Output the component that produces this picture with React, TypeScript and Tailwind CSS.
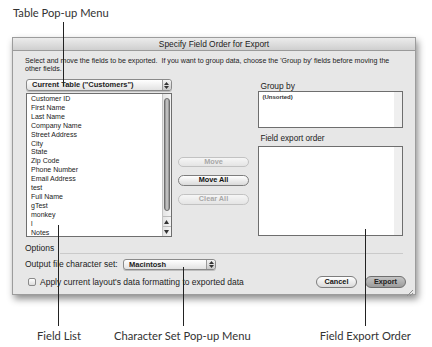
import React from 'react';

const fields = [
  'Customer ID',
  'First Name',
  'Last Name',
  'Company Name',
  'Street Address',
  'City',
  'State',
  'Zip Code',
  'Phone Number',
  'Email Address',
  'test',
  'Full Name',
  'gTest',
  'monkey',
  'l',
  'Notes',
];

const PopupArrows: React.FC = () => (
  <div className="flex h-full w-[9px] flex-col items-center justify-center gap-[1px] rounded-r-[3px] border-l border-[#9a9a9a] bg-gradient-to-b from-[#f4f4f4] to-[#c8c8c8]">
    <svg width="5" height="3" viewBox="0 0 5 3">
      <path d="M0 3 L2.5 0 L5 3 Z" fill="#333" />
    </svg>
    <svg width="5" height="3" viewBox="0 0 5 3">
      <path d="M0 0 L2.5 3 L5 0 Z" fill="#333" />
    </svg>
  </div>
);

const Popup: React.FC<{ label: string; className: string }> = ({ label, className }) => (
  <div
    className={`flex items-center justify-between rounded-[3px] border border-[#8a8a8a] bg-gradient-to-b from-[#ffffff] to-[#e2e2e2] shadow-[0_1px_0_#bdbdbd] ${className}`}
  >
    <span className="pl-[5px] text-[7.5px] font-bold text-[#222]">{label}</span>
    <PopupArrows />
  </div>
);

const Pill: React.FC<{ label: string; disabled?: boolean; dark?: boolean; className?: string }> = ({
  label,
  disabled,
  dark,
  className,
}) => (
  <div
    className={`flex items-center justify-center rounded-full border ${
      dark
        ? 'border-[#6f6f6f] bg-gradient-to-b from-[#c4c4c4] to-[#9c9c9c] text-[#222]'
        : disabled
          ? 'border-[#c2c2c2] bg-gradient-to-b from-[#f6f6f6] to-[#e4e4e4] text-[#a8a8a8]'
          : 'border-[#7d7d7d] bg-gradient-to-b from-[#ffffff] to-[#dadada] text-[#111]'
    } text-[7.3px] font-bold ${className ?? ''}`}
  >
    {label}
  </div>
);

const App: React.FC = () => {
  return (
    <div className="relative h-[347px] w-[432px] overflow-hidden bg-white font-['Liberation_Sans',Arial,sans-serif]">
      {/* top callout */}
      <div className="h-[37px] whitespace-nowrap pl-[13px] pt-[6px] font-['Lato',sans-serif] text-[11.2px] leading-[14px] text-[#333]">
        Table Pop-up Menu
      </div>

      {/* dialog */}
      <div className="ml-[12px] flex h-[258px] w-[404px] flex-col border border-[#9c9c9c] bg-[#e7e7e7] shadow-[2px_4px_7px_rgba(0,0,0,0.45)]">
        <div className="flex h-[13px] shrink-0 items-center justify-center border-b border-[#9a9a9a] bg-gradient-to-b from-[#ececec] to-[#cfcfcf] text-[8.4px] text-[#222]">
          Specify Field Order for Export
        </div>

        <div className="flex flex-1 flex-col px-[12px] pt-[6px]">
          <p className="w-[378px] text-[7.1px] leading-[8px] text-[#222]">
            Select and move the fields to be exported.&nbsp; If you want to group data, choose the 'Group by' fields
            before moving the other fields.
          </p>

          <div className="mt-[6px] flex">
            {/* left column */}
            <div className="ml-[1px] flex w-[148px] flex-col">
              <Popup label={'Current Table ("Customers")'} className="h-[12px]" />
              <div className="mt-[2px] flex h-[144px] border border-[#6e6e6e] bg-white">
                <div className="flex-1 pl-[4px] pt-[1px] text-[7px] leading-[8.9px] text-[#222]">
                  {fields.map((f) => (
                    <div key={f}>{f}</div>
                  ))}
                </div>
                <div className="flex w-[9px] flex-col border-l border-[#c4c4c4] bg-gradient-to-r from-[#e4e4e4] to-[#f4f4f4]">
                  <div className="mx-[1px] mt-[4px] h-[113px] rounded-full border border-[#6e6e6e] bg-gradient-to-r from-[#8a8a8a] via-[#d0d0d0] to-[#8a8a8a]" />
                  <div className="flex-1" />
                  <div className="flex h-[10px] items-center justify-center border-t border-[#bcbcbc]">
                    <svg width="5" height="4" viewBox="0 0 5 4">
                      <path d="M0 4 L2.5 0 L5 4 Z" fill="#333" />
                    </svg>
                  </div>
                  <div className="flex h-[10px] items-center justify-center border-t border-[#bcbcbc]">
                    <svg width="5" height="4" viewBox="0 0 5 4">
                      <path d="M0 0 L2.5 4 L5 0 Z" fill="#333" />
                    </svg>
                  </div>
                </div>
              </div>
            </div>

            {/* middle buttons */}
            <div className="ml-[6px] flex w-[73px] flex-col pt-[78px]">
              <Pill label="Move" disabled className="h-[10px]" />
              <Pill label="Move All" className="mt-[8px] h-[11px]" />
              <Pill label="Clear All" disabled className="mt-[8px] h-[11px]" />
            </div>

            {/* right column */}
            <div className="ml-[9px] flex w-[147px] flex-col">
              <div className="pl-[2px] pt-[2px] text-[8.4px] leading-[10px] text-[#222]">Group by</div>
              <div className="flex h-[37px] border border-[#6e6e6e] bg-white">
                <div className="flex-1 pl-[3px] pt-[1px] text-[6px] font-bold leading-[8px] text-[#333]">(Unsorted)</div>
                <div className="w-[8px] bg-[#efefef]" />
              </div>
              <div className="mt-[6px] pl-[2px] text-[8.2px] leading-[10px] text-[#222]">Field export order</div>
              <div className="mt-[2px] flex h-[90px] border border-[#6e6e6e] bg-white">
                <div className="flex-1" />
                <div className="w-[8px] bg-[#efefef]" />
              </div>
            </div>
          </div>

          {/* options */}
          <div className="mt-[6px] flex items-end">
            <span className="text-[8.5px] leading-[10px] text-[#222]">Options</span>
            <div className="mb-[-1px] ml-[6px] h-px flex-1 bg-[#cacaca]" />
          </div>

          <div className="mt-[5px] flex items-center">
            <span className="w-[98px] whitespace-nowrap text-[8.5px] text-[#222]">Output file character set:</span>
            <Popup label="Macintosh" className="h-[11px] w-[93px]" />
          </div>

          <div className="mt-[5px] flex items-center">
            <div className="ml-[3px] h-[8px] w-[8px] rounded-[2px] border border-[#8a8a8a] bg-gradient-to-b from-white to-[#dcdcdc]" />
            <span className="ml-[4px] whitespace-nowrap text-[8.5px] text-[#222]">
              Apply current layout's data formatting to exported data
            </span>
            <div className="flex-1" />
            <Pill label="Cancel" className="h-[12px] w-[41px]" />
            <Pill label="Export" dark className="ml-[8px] mr-[-3px] h-[12px] w-[41px]" />
          </div>
        </div>
        <div className="flex justify-end pb-[1px] pr-[1px]">
          <svg width="8" height="8" viewBox="0 0 8 8">
            <path d="M7 1 L1 7 M7 4 L4 7" stroke="#8e8e8e" strokeWidth="1" />
          </svg>
        </div>
      </div>

      {/* bottom callouts */}
      <div className="mt-[34px] flex whitespace-nowrap font-['Lato',sans-serif] text-[11.2px] leading-[14px] text-[#333]">
        <span className="ml-[37px] shrink-0">Field List</span>
        <span className="ml-[33px] shrink-0">Character Set Pop-up Menu</span>
        <span className="ml-[69px] shrink-0">Field Export Order</span>
      </div>

      {/* callout leader lines */}
      <div className="absolute left-[63px] top-[22px] h-[64px] w-px bg-[#222]" />
      <div className="absolute left-[58px] top-[225px] h-[101px] w-px bg-[#222]" />
      <div className="absolute left-[183px] top-[267px] h-[59px] w-px bg-[#222]" />
      <div className="absolute left-[365px] top-[229px] h-[97px] w-px bg-[#222]" />
    </div>
  );
};

export default App;
